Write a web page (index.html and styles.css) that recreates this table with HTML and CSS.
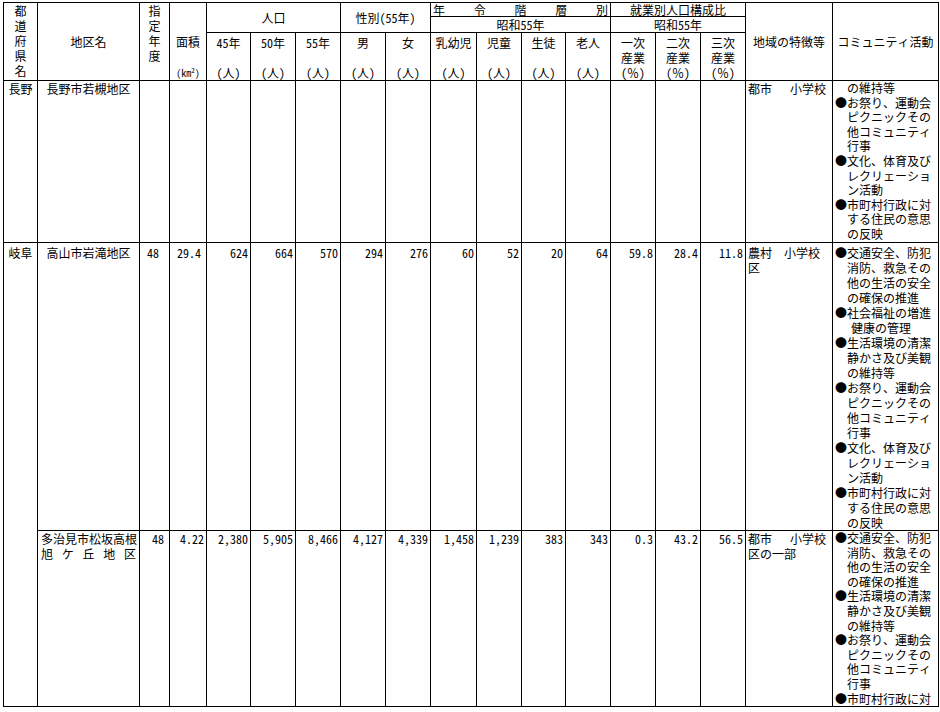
FILE: index.html
```html
<!DOCTYPE html>
<html lang="ja">
<head>
<meta charset="utf-8">
<title>コミュニティ地区一覧</title>
<link rel="stylesheet" href="styles.css">
</head>
<body>
<div class="page">
<table class="grid">
  <colgroup>
    <col class="w-pref"><col class="w-name"><col class="w-year"><col class="w-area">
    <col class="w-44"><col class="w-45"><col class="w-45"><col class="w-45"><col class="w-45">
    <col class="w-46"><col class="w-45"><col class="w-44"><col class="w-45">
    <col class="w-45"><col class="w-45"><col class="w-45">
    <col class="w-feat"><col class="w-comm">
  </colgroup>
  <thead>
    <tr class="ha">
      <th rowspan="3" class="top">都<br>道<br>府<br>県<br>名</th>
      <th rowspan="3" class="mid">地区名</th>
      <th rowspan="3" class="top">指<br>定<br>年<br>度</th>
      <th rowspan="3" class="bot">面積<br><br><span class="unit">(km<sup>2</sup>)</span></th>
      <th rowspan="2" colspan="3" class="mid">人口</th>
      <th rowspan="2" colspan="2" class="mid">性別(55年)</th>
      <th colspan="4" class="short"><div class="spread"><span>年</span><span>令</span><span>階</span><span>層</span><span>別</span></div></th>
      <th colspan="3" class="short">就業別人口構成比</th>
      <th rowspan="3" class="mid">地域の特徴等</th>
      <th rowspan="3" class="mid">コミュニティ活動</th>
    </tr>
    <tr class="hb">
      <th colspan="4" class="sub">昭和55年</th>
      <th colspan="3" class="sub">昭和55年</th>
    </tr>
    <tr class="hc">
      <th class="bot">45年<br><br>(人)</th>
      <th class="bot">50年<br><br>(人)</th>
      <th class="bot">55年<br><br>(人)</th>
      <th class="bot">男<br><br>(人)</th>
      <th class="bot">女<br><br>(人)</th>
      <th class="bot">乳幼児<br><br>(人)</th>
      <th class="bot">児童<br><br>(人)</th>
      <th class="bot">生徒<br><br>(人)</th>
      <th class="bot">老人<br><br>(人)</th>
      <th class="bot">一次<br>産業<br>(％)</th>
      <th class="bot">二次<br>産業<br>(％)</th>
      <th class="bot">三次<br>産業<br>(％)</th>
    </tr>
  </thead>
  <tbody>
    <tr class="r1">
      <td class="pref">長野</td>
      <td class="name">長野市若槻地区</td>
      <td></td><td></td>
      <td></td><td></td><td></td><td></td><td></td>
      <td></td><td></td><td></td><td></td>
      <td></td><td></td><td></td>
      <td class="feat">都市　 小学校</td>
      <td class="comm">
        <div class="clip clip-r1">
          <div class="cont">の維持等</div>
          <div>●お祭り、運動会</div>
          <div class="cont">ピクニックその</div>
          <div class="cont">他コミュニティ</div>
          <div class="cont">行事</div>
          <div>●文化、体育及び</div>
          <div class="cont">レクリェーショ</div>
          <div class="cont">ン活動</div>
          <div>●市町村行政に対</div>
          <div class="cont">する住民の意思</div>
          <div class="cont">の反映</div>
        </div>
      </td>
    </tr>
    <tr class="r2">
      <td class="pref" rowspan="2">岐阜</td>
      <td class="name">高山市岩滝地区</td>
      <td class="num pad-year">48</td>
      <td class="num pad-dec">29.4</td>
      <td class="num">624</td>
      <td class="num">664</td>
      <td class="num">570</td>
      <td class="num">294</td>
      <td class="num">276</td>
      <td class="num">60</td>
      <td class="num">52</td>
      <td class="num">20</td>
      <td class="num">64</td>
      <td class="num">59.8</td>
      <td class="num">28.4</td>
      <td class="num">11.8</td>
      <td class="feat">農村　小学校<br>区</td>
      <td class="comm">
        <div>●交通安全、防犯</div>
        <div class="cont">消防、救急その</div>
        <div class="cont">他の生活の安全</div>
        <div class="cont">の確保の推進</div>
        <div>●社会福祉の増進</div>
        <div class="cont deep">健康の管理</div>
        <div>●生活環境の清潔</div>
        <div class="cont">静かさ及び美観</div>
        <div class="cont">の維持等</div>
        <div>●お祭り、運動会</div>
        <div class="cont">ピクニックその</div>
        <div class="cont">他コミュニティ</div>
        <div class="cont">行事</div>
        <div>●文化、体育及び</div>
        <div class="cont">レクリェーショ</div>
        <div class="cont">ン活動</div>
        <div>●市町村行政に対</div>
        <div class="cont">する住民の意思</div>
        <div class="cont">の反映</div>
      </td>
    </tr>
    <tr class="r3">
      <td class="name"><div>多治見市松坂高根</div><div class="spread"><span>旭</span><span>ケ</span><span>丘</span><span>地</span><span>区</span></div></td>
      <td class="num pad-year3">48</td>
      <td class="num">4.22</td>
      <td class="num">2,380</td>
      <td class="num">5,905</td>
      <td class="num">8,466</td>
      <td class="num">4,127</td>
      <td class="num">4,339</td>
      <td class="num">1,458</td>
      <td class="num">1,239</td>
      <td class="num">383</td>
      <td class="num">343</td>
      <td class="num">0.3</td>
      <td class="num">43.2</td>
      <td class="num">56.5</td>
      <td class="feat">都市　 小学校<br>区の一部</td>
      <td class="comm">
        <div class="clip clip-r3">
          <div>●交通安全、防犯</div>
          <div class="cont">消防、救急その</div>
          <div class="cont">他の生活の安全</div>
          <div class="cont">の確保の推進</div>
          <div>●生活環境の清潔</div>
          <div class="cont">静かさ及び美観</div>
          <div class="cont">の維持等</div>
          <div>●お祭り、運動会</div>
          <div class="cont">ピクニックその</div>
          <div class="cont">他コミュニティ</div>
          <div class="cont">行事</div>
          <div>●市町村行政に対</div>
        </div>
      </td>
    </tr>
  </tbody>
</table>
</div>
</body>
</html>
```
FILE: styles.css
```css
html, body {
  margin: 0;
  padding: 0;
  background: #ffffff;
}

body {
  font-family: "Noto Sans Mono CJK JP", "Noto Sans CJK JP", "DejaVu Sans", sans-serif;
  font-size: 12px;
  color: #000000;
}

.page {
  padding: 2px 0 0 3px;
}

.grid {
  border-collapse: collapse;
  table-layout: fixed;
  width: 936px;
}

.grid th,
.grid td {
  border: 1px solid #000000;
  padding: 0;
  font-weight: normal;
  line-height: 15px;
  text-align: center;
  vertical-align: top;
  white-space: nowrap;
}

.w-pref { width: 34px; }
.w-name { width: 102px; }
.w-year { width: 30px; }
.w-area { width: 37px; }
.w-44 { width: 44px; }
.w-45 { width: 45px; }
.w-46 { width: 46px; }
.w-feat { width: 87px; }
.w-comm { width: 106px; }

/* header rows */
.ha { height: 13px; }
.hb { height: 16px; }
.hc { height: 48px; }

.grid th.top { vertical-align: top; }
.grid th.mid { vertical-align: middle; }
.grid th.bot { vertical-align: bottom; }
.grid th.short { line-height: 13px; vertical-align: middle; }
.grid th.sub { vertical-align: middle; }

.spread {
  display: flex;
  justify-content: space-between;
  padding: 0 2px;
}

.unit {
  font-size: 10px;
}

.unit sup {
  font-size: 7px;
  line-height: 0;
}

/* body rows */
.r2 td {
  padding-top: 2px;
}

.grid td.pref {
  text-align: center;
}

.grid td.name {
  text-align: center;
  padding-left: 3px;
  padding-right: 3px;
}

.grid td.name .spread {
  padding: 0;
}

.grid td.num {
  text-align: right;
  padding-right: 2px;
}

.grid td.pad-year {
  padding-right: 10px;
}

.grid td.pad-year3 {
  padding-right: 5px;
}

.grid td.pad-dec {
  padding-right: 5px;
}

.grid td.feat {
  text-align: left;
  padding-left: 2px;
}

.grid td.comm {
  text-align: left;
  padding-left: 2px;
}

.comm .cont {
  padding-left: 12px;
}

.comm .deep {
  padding-left: 16px;
}

.clip {
  line-height: 14.6px;
}

.clip-r1 {
  height: 161px;
}

.clip-r3 {
  height: 175px;
}
```
